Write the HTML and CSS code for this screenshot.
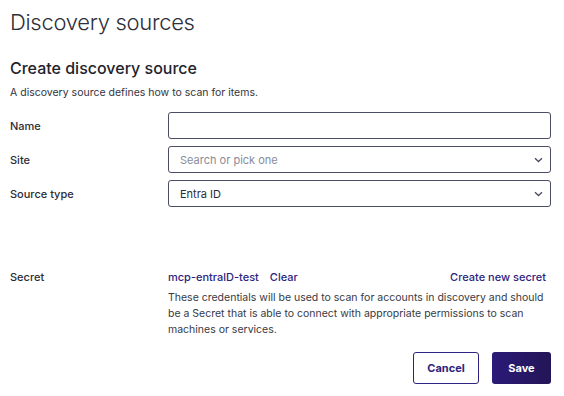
FILE: index.html
```html
<!DOCTYPE html>
<html lang="en">
<head>
  <meta charset="UTF-8" />
  <meta name="viewport" content="width=device-width, initial-scale=1.0" />
  <title>Discovery sources</title>
  <link rel="stylesheet" href="styles.css">
</head>
<body>
  <div class="page">
    <h1 class="page-title">Discovery sources</h1>
    <h2 class="form-title">Create discovery source</h2>
    <p class="form-desc">A discovery source defines how to scan for items.</p>

    <div class="form-row">
      <label class="form-label">Name</label>
      <div class="field"></div>
    </div>
    <div class="form-row">
      <label class="form-label">Site</label>
      <div class="field select">
        <span class="placeholder">Search or pick one</span>
        <svg class="chev" width="9" height="6" viewBox="0 0 9 6"><path d="M1 1.2 L4.5 4.5 L8 1.2" fill="none" stroke="#4a4d63" stroke-width="1.3"/></svg>
      </div>
    </div>
    <div class="form-row">
      <label class="form-label">Source type</label>
      <div class="field select">
        <span class="value">Entra ID</span>
        <svg class="chev" width="9" height="6" viewBox="0 0 9 6"><path d="M1 1.2 L4.5 4.5 L8 1.2" fill="none" stroke="#4a4d63" stroke-width="1.3"/></svg>
      </div>
    </div>

    <div class="secret-row">
      <label class="form-label">Secret</label>
      <div class="secret-body">
        <div class="secret-links">
          <a class="link">mcp-entralD-test</a>
          <a class="link">Clear</a>
          <a class="link new-secret">Create new secret</a>
        </div>
        <p class="secret-help">These credentials will be used to scan for accounts in discovery and should be a Secret that is able to connect with appropriate permissions to scan machines or services.</p>
      </div>
    </div>

    <div class="actions">
      <button class="btn btn-outline">Cancel</button>
      <button class="btn btn-primary">Save</button>
    </div>
  </div>
</body>
</html>
```

FILE: styles.css
```css
html, body {
  margin: 0;
  padding: 0;
  background: #ffffff;
  font-family: Inter, "Noto Sans", sans-serif;
  color: #2b2c36;
}

.page {
  width: 541px;
  padding: 8px 0 0 10px;
}

.page-title {
  margin: 0;
  font-size: 22px;
  font-weight: 300;
  letter-spacing: -0.3px;
  line-height: 28px;
  color: #2e2f38;
}

.form-title {
  margin: 21px 0 0;
  font-size: 16px;
  font-weight: 500;
  line-height: 22px;
  color: #22232c;
}

.form-desc {
  margin: 7px 0 0;
  font-size: 10.5px;
  line-height: 14px;
  color: #33343e;
}

.form-row {
  display: flex;
  align-items: center;
  margin-top: 7px;
}

.form-row:first-of-type {
  margin-top: 12px;
}

.form-label {
  width: 158px;
  font-size: 11px;
  font-weight: 500;
  color: #2b2c36;
}

.field {
  flex: 1;
  height: 27px;
  box-sizing: border-box;
  border: 1px solid #4a4d63;
  border-radius: 3px;
  display: flex;
  align-items: center;
  justify-content: space-between;
  padding: 0 7px 0 11px;
  font-size: 11px;
}

.placeholder {
  color: #8a8c99;
}

.value {
  color: #2b2c36;
}

.secret-row {
  display: flex;
  margin-top: 63px;
}

.secret-row .form-label {
  line-height: 15px;
}

.secret-body {
  flex: 1;
}

.secret-links {
  display: flex;
  gap: 11px;
  font-size: 11px;
  font-weight: 500;
  line-height: 15px;
  padding-right: 5px;
}

.link {
  color: #2d2380;
}

.new-secret {
  margin-left: auto;
}

.secret-help {
  margin: 5px 0 0;
  font-size: 10.5px;
  line-height: 16px;
  color: #383944;
}

.actions {
  display: flex;
  justify-content: flex-end;
  gap: 13px;
  margin-top: 14px;
}

.btn {
  height: 32px;
  border-radius: 3px;
  font-family: inherit;
  font-size: 11px;
  font-weight: 700;
  cursor: pointer;
}

.btn-outline {
  width: 66px;
  background: #ffffff;
  border: 1px solid #2d2380;
  color: #2d2380;
}

.btn-primary {
  width: 59px;
  border: none;
  background: linear-gradient(90deg, #2b1a78, #231556);
  color: #ffffff;
}
```
